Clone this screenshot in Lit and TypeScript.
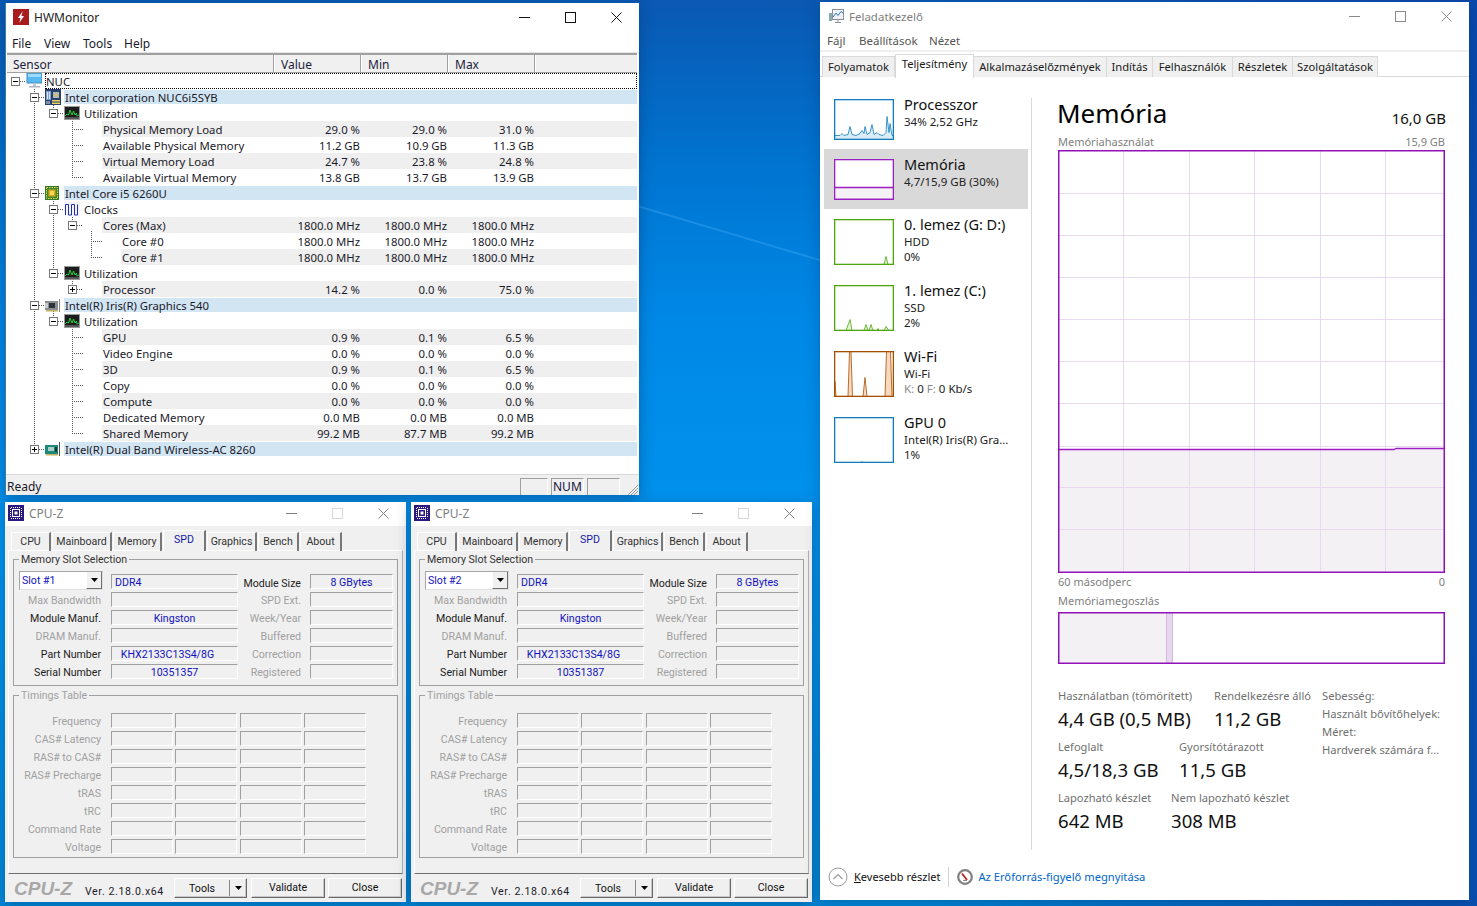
import { LitElement, html, css, svg } from "lit";
import { customElement, property } from "lit/decorators.js";

const UI = css`"Noto Sans", "Open Sans", sans-serif`;

const base = css`
  * { box-sizing: border-box; }
  :host { display: block; height: 100%; font-family: ${UI}; font-size: 11.35px; color: #1a1a2a; }
  .title { display: flex; align-items: center; flex: none; background: #fff; }
  .ctl { margin-left: auto; display: flex; }
  .ctl span { width: 46px; display: flex; align-items: center; justify-content: center; }
  .ctl svg { display: block; }
`;

function controls(color: string, maxColor = color) {
  return html`<div class="ctl">
    <span><svg width="11" height="11" viewBox="0 0 11 11"><path d="M0 5.5H11" stroke=${color} fill="none"/></svg></span>
    <span><svg width="11" height="11" viewBox="0 0 11 11"><rect x=".5" y=".5" width="10" height="10" stroke=${maxColor} fill="none"/></svg></span>
    <span><svg width="11" height="11" viewBox="0 0 11 11"><path d="M.5 .5L10.5 10.5M10.5 .5L.5 10.5" stroke=${color} fill="none"/></svg></span>
  </div>`;
}

/* ---------- HWMonitor icons ---------- */
const icons: Record<string, unknown> = {
  monitor: svg`<rect x="1" y="0" width="15" height="10" fill="#58b8f0" stroke="#3a8cc8"/><rect x="2" y="1" width="13" height="3" fill="#9adcff"/><rect x="7" y="10" width="3" height="3" fill="#c0c8d0"/><rect x="3" y="13" width="11" height="1.5" fill="#aab4c0"/>`,
  board: svg`<rect x="0" y="0" width="16" height="16" fill="#28406e"/><rect x="1" y="2" width="5" height="9" fill="#7f9fd0"/><rect x="2" y="3" width="1" height="7" fill="#d8e4f4"/><rect x="4" y="3" width="1" height="7" fill="#d8e4f4"/><rect x="8" y="3" width="6" height="6" fill="#b4b8b0"/><rect x="10" y="5" width="2" height="2" fill="#e8c040"/><rect x="7" y="11" width="8" height="1.5" fill="#e8d060"/><rect x="7" y="13.5" width="8" height="1.5" fill="#e8d060"/><rect x="1" y="12" width="4" height="3" fill="#8090a8"/>`,
  util: svg`<rect x=".5" y="1.500" width="15" height="13" fill="#1c1c1c" stroke="#9a9a9a"/><rect x="1" y="12" width="14" height="2" fill="#555"/><path d="M1 11L3 9L4.500 10L6 5L8 10L9.500 6L11 10L12.500 8L13 11L15 10" stroke="#20d040" fill="none"/>`,
  cpu: svg`<rect x="0" y="1" width="14" height="14" fill="#2f7a2c"/><rect x="1.500" y="2.500" width="11" height="11" fill="#3f8a30" stroke="#e8d040" stroke-dasharray="1.500 1"/><rect x="3.500" y="4.500" width="7" height="7" fill="#d8a820"/><rect x="5" y="6" width="4" height="4" fill="#f8d850"/>`,
  clock: svg`<rect x="0" y="1" width="16" height="14" fill="#f2f3fb"/><path d="M1.500 14V3.500H4.500V14H7.500V3.500H10.500V14H13.500V3.500" stroke="#2030a8" fill="none"/>`,
  gpu: svg`<rect x="0" y="4" width="13" height="9" fill="#8a8f94"/><rect x="4" y="6" width="6" height="5" fill="#30343a"/><rect x="1" y="13" width="12" height="1.500" fill="#c8b060"/><path d="M14.500 2V15" stroke="#888" fill="none"/><rect x="0" y="6" width="3" height="5" fill="#c8ccd0"/>`,
  wifi: svg`<rect x="0" y="4" width="13" height="9" fill="#1c8a78"/><rect x="3" y="6" width="6" height="4" fill="#a8d0c8"/><rect x="1" y="13" width="12" height="1.500" fill="#c8b060"/><path d="M14.500 1V15" stroke="#555" fill="none"/><rect x="10" y="6" width="2" height="5" fill="#103830"/>`,
};

type Row = { d: number; t: string; icon?: string; exp?: "-" | "+"; kind?: string; v?: string[]; alt?: boolean };
const R = (d: number, t: string, v: string[], alt: boolean): Row => ({ d, t, v, alt });
const mhz = "1800.0 MHz";
const rows: Row[] = [
  { d: 0, t: "NUC", icon: "monitor", exp: "-", kind: "root" },
  { d: 1, t: "Intel corporation NUC6i5SYB", icon: "board", exp: "-", kind: "hw" },
  { d: 2, t: "Utilization", icon: "util", exp: "-" },
  R(3, "Physical Memory Load", ["29.0 %", "29.0 %", "31.0 %"], true),
  R(3, "Available Physical Memory", ["11.2 GB", "10.9 GB", "11.3 GB"], false),
  R(3, "Virtual Memory Load", ["24.7 %", "23.8 %", "24.8 %"], true),
  R(3, "Available Virtual Memory", ["13.8 GB", "13.7 GB", "13.9 GB"], false),
  { d: 1, t: "Intel Core i5 6260U", icon: "cpu", exp: "-", kind: "hw" },
  { d: 2, t: "Clocks", icon: "clock", exp: "-" },
  { d: 3, t: "Cores (Max)", exp: "-", v: [mhz, mhz, mhz], alt: true },
  R(4, "Core #0", [mhz, mhz, mhz], false),
  R(4, "Core #1", [mhz, mhz, mhz], true),
  { d: 2, t: "Utilization", icon: "util", exp: "-" },
  { d: 3, t: "Processor", exp: "+", v: ["14.2 %", "0.0 %", "75.0 %"], alt: true },
  { d: 1, t: "Intel(R) Iris(R) Graphics 540", icon: "gpu", exp: "-", kind: "hw" },
  { d: 2, t: "Utilization", icon: "util", exp: "-" },
  R(3, "GPU", ["0.9 %", "0.1 %", "6.5 %"], true),
  R(3, "Video Engine", ["0.0 %", "0.0 %", "0.0 %"], false),
  R(3, "3D", ["0.9 %", "0.1 %", "6.5 %"], true),
  R(3, "Copy", ["0.0 %", "0.0 %", "0.0 %"], false),
  R(3, "Compute", ["0.0 %", "0.0 %", "0.0 %"], true),
  R(3, "Dedicated Memory", ["0.0 MB", "0.0 MB", "0.0 MB"], false),
  R(3, "Shared Memory", ["99.2 MB", "87.7 MB", "99.2 MB"], true),
  { d: 1, t: "Intel(R) Dual Band Wireless-AC 8260", icon: "wifi", exp: "+", kind: "hw" },
];

const guidePath = (() => {
  const h = (y: number, a: number, b: number) => `M${a} ${y + 0.5}H${b}`;
  const v = (x: number, a: number, b: number) => `M${x + 0.5} ${a}V${b}`;
  const p: string[] = [];
  p.push(h(82, 20, 26), v(34, 90, 447));
  [98, 194, 306, 450].forEach((y) => p.push(h(y, 39, 45)));
  p.push(v(53, 104, 110), v(53, 200, 270), v(53, 312, 318));
  [114, 210, 274, 322].forEach((y) => p.push(h(y, 58, 64)));
  p.push(v(72, 216, 222), v(72, 280, 286), h(226, 77, 83), h(290, 77, 83));
  p.push(v(72, 120, 179), v(72, 328, 435));
  [130, 146, 162, 178, 338, 354, 370, 386, 402, 418, 434].forEach((y) => p.push(h(y, 72, 83)));
  p.push(v(91, 232, 259), h(242, 91, 102), h(258, 91, 102));
  return p.join("");
})();

@customElement("hw-monitor")
class HwMonitor extends LitElement {
  static styles = [base, css`
    .win { height: 100%; display: flex; flex-direction: column; background: #fff; border-left: 1px solid #3a7aa8; box-shadow: 0 4px 14px rgba(0,40,90,.4); }
    .title { height: 28px; padding-left: 7px; font-size: 12px; color: #222; }
    .logo { margin-right: 5px; display: block; }
    .menu { display: grid; grid-template-columns: 32px 39px 41px auto; height: 22px; padding: 4px 0 0 6px; font-size: 12px; flex: none; border-bottom: 1px solid #e4e4e4; }
    .head { display: flex; height: 20px; margin: 0 2px 0 1px; flex: none; border-top: 2px solid #a0a0a0; border-bottom: 1px solid #a0a0a0; background: #f0f0f0; font-size: 12px; color: #1c1c3a; line-height: 19px; }
    .head span { width: 87px; padding-left: 7px; border-right: 1px solid #a0a0a0; box-shadow: 1px 0 0 #fff; }
    .head span.first { width: 267px; padding-left: 6px; }
    .head span.last { flex: 1; border: 0; box-shadow: none; }
    .tree { position: relative; flex: 1; margin: 0 2px 0 1px; }
    .guides { position: absolute; left: 0; top: 0; pointer-events: none; }
    .row { display: flex; height: 16px; position: relative; }
    .gut { flex: none; display: flex; align-items: center; position: relative; z-index: 1; }
    .exp { flex: none; display: block; margin-top: 1px; }
    .ico { flex: none; display: block; margin-left: 6px; }
    .body { flex: 1; display: flex; line-height: 18px; padding-left: 1px; }
    .body .n { flex: 1; white-space: nowrap; }
    .body .c { width: 87px; text-align: right; white-space: nowrap; }
    .body .e { width: 103px; }
    .alt { background: #efefef; }
    .hw { background: #d2e5f3; margin: 1px 0; line-height: 15px; }
    .root { outline: 1px dotted #000; outline-offset: -1px; }
    .status { height: 21px; flex: none; display: flex; background: #f0f0f0; border-top: 1px solid #d8d8d8; align-items: flex-end; font-size: 12px; padding-left: 1px; }
    .status .rd { margin-right: auto; line-height: 16px; }
    .pane { height: 17px; border-top: 1px solid #a0a0a0; border-left: 1px solid #a0a0a0; border-right: 1px solid #fff; margin-left: 3px; line-height: 16px; padding-left: 1px; }
    .p1 { width: 28px; } .p2 { width: 33px; color: #14143c; } .p3 { width: 33px; }
    .grip { margin-left: 7px; margin-right: 1px; display: block; }
  `];
  render() {
    return html`<div class="win">
      <div class="title">
        <svg class="logo" width="16" height="16" viewBox="0 0 16 16"><rect width="16" height="16" fill="#a81c20"/><path d="M9.800 2L5 9H7.600L6.200 14L11 7H8.400Z" fill="#fff"/></svg>
        HWMonitor
        ${controls("#111")}
      </div>
      <div class="menu"><span>File</span><span>View</span><span>Tools</span><span>Help</span></div>
      <div class="head"><span class="first">Sensor</span><span>Value</span><span>Min</span><span>Max</span><span class="last"></span></div>
      <div class="tree">
        <svg class="guides" width="630" height="384" viewBox="7 74 630 384"><path d=${guidePath} stroke="#555" fill="none" stroke-dasharray="1 1"/></svg>
        ${rows.map((r) => this.row(r))}
      </div>
      <div class="status">
        <span class="rd">Ready</span>
        <span class="pane p1"></span><span class="pane p2">NUM</span><span class="pane p3"></span>
        <svg class="grip" width="11" height="11" viewBox="0 0 11 11"><path d="M1 11L11 1M4 11L11 4M7 11L11 7" stroke="#999" fill="none"/></svg>
      </div>
    </div>`;
  }
  row(r: Row) {
    const cls = ["body", r.alt ? "alt" : "", r.kind ?? ""].join(" ");
    return html`<div class="row">
      <div class="gut" style="width:${38 + 19 * r.d}px;padding-left:${4 + 19 * r.d}px">
        ${r.exp ? html`<svg class="exp" width="9" height="9" viewBox="0 0 9 9"><rect x=".5" y=".5" width="8" height="8" fill="#fff" stroke="#777"/><path d=${r.exp === "-" ? "M2 4.500H7" : "M2 4.500H7M4.500 2V7"} stroke="#000" fill="none"/></svg>` : ""}
        ${r.icon ? html`<svg class="ico" width="16" height="16" viewBox="0 0 16 16">${icons[r.icon]}</svg>` : ""}
      </div>
      <div class=${cls}>
        <span class="n">${r.t}</span>
        ${r.v ? html`<span class="c">${r.v[0]}</span><span class="c">${r.v[1]}</span><span class="c">${r.v[2]}</span><span class="e"></span>` : ""}
      </div>
    </div>`;
  }
}

/* ---------- CPU-Z ---------- */
@customElement("cpu-z-window")
class CpuZWindow extends LitElement {
  @property() slotName = "Slot #1";
  @property() serial = "10351357";
  static styles = [base, css`
    :host { font-family: Roboto, "Noto Sans", sans-serif; font-size: 10.6px; }
    .win { height: 100%; display: flex; flex-direction: column; background: #f0f0f0; box-shadow: 0 4px 14px rgba(0,40,90,.35); }
    .title { height: 24px; padding: 0 0 2px 3px; font-size: 12px; color: #808080; font-family: ${UI}; }
    .logo { display: block; margin-right: 5px; }
    .tabs { display: grid; grid-template-columns: 41px 61px 50px 44px 51px 42px 43px; height: 20px; margin: 4px 0 0 6px; flex: none; position: relative; z-index: 1; }
    .tab { margin-top: 2px; border-top: 1px solid #fff; border-left: 1px solid #fff; border-right: 2px solid #787878; text-align: center; line-height: 18px; margin-right: 1px; color: #333; }
    .tab.on { margin-top: 0; height: 21px; background: #f0f0f0; color: #1818a8; line-height: 18px; }
    .panel { flex: 1; margin: 0 3px; padding: 1px 4px 0 4px; border-top: 1px solid #fff; border-left: 1px solid #fff; border-right: 1px solid #b0b0b0; border-bottom: 1px solid #707070; }
    fieldset { margin: 0 0 2px; padding: 0; min-width: 0; border: 1px solid #a0a0a0; width: 385px; }
    legend { margin-left: 5px; padding: 0 2px; line-height: 15px; margin-bottom: -1px; color: #333; }
    .off legend { color: #a0a0a0; }
    .g1 { display: grid; grid-auto-rows: 15px; row-gap: 3px; padding: 8px 0 0; height: 119px; grid-template-columns: 87px 10px 127px 63px 9px 83px; }
    .g2 { display: grid; grid-template-columns: 87px 10px 64px 65px 64px 64px; grid-auto-rows: 15px; row-gap: 3px; padding: 11px 0 0; height: 155px; }
    .lb { text-align: right; line-height: 17px; white-space: nowrap; color: #222; }
    .lb.dis { color: #a0a0a0; }
    .lb.low { line-height: 19px; }
    .f { border-top: 1px solid #a0a0a0; border-left: 1px solid #a0a0a0; border-bottom: 1px solid #fff; border-right: 1px solid #fff; color: #1212c0; text-align: center; line-height: 15px; white-space: nowrap; }
    .f.l { text-align: left; padding-left: 3px; }
    .f.pn { padding-right: 14px; }
    .sp { display: block; }
    .g2 .f { margin-right: 2px; }
    .g2 .f:nth-child(6n + 4) { margin-right: 3px; }
    .sel { margin: -3px -2px -1px 5px; height: 19px; background: #fff; border: 1px solid #a8a8a8; border-right-color: #e0e0e0; border-bottom-color: #e0e0e0; display: flex; justify-content: space-between; color: #1212c0; padding-left: 2px; line-height: 18px; }
    .sel i { width: 16px; background: #f0f0f0; border-left: 1px solid #fff; display: flex; align-items: center; justify-content: center; border-right: 1px solid #707070; border-bottom: 1px solid #707070; }
    .foot { height: 28px; flex: none; display: flex; align-items: flex-start; padding: 4px 0 0 9px; }
    .brand { width: 71px; font: italic bold 19px/21px "Liberation Sans", sans-serif; color: #a8a8a8; }
    .ver { width: 89px; padding-top: 6px; line-height: 16px; letter-spacing: .6px; }
    .btn { height: 20px; background: #f0f0f0; border-top: 1px solid #fff; border-left: 1px solid #fff; border-right: 1px solid #696969; border-bottom: 1px solid #696969; box-shadow: inset -1px -1px 0 #c8c8c8; text-align: center; line-height: 17px; color: #111; width: 74px; margin-right: 3px; }
    .tools { display: flex; width: 73px; margin-right: 4px; padding: 0; }
    .tools span { flex: 1; line-height: 19px; }
    .tools i { width: 17px; border-left: 1px solid #888; display: flex; align-items: center; justify-content: center; height: 16px; margin-top: 1px; }
  `];
  render() {
    const tabs = ["CPU", "Mainboard", "Memory", "SPD", "Graphics", "Bench", "About"];
    const timing = ["Frequency", "CAS# Latency", "RAS# to CAS#", "RAS# Precharge", "tRAS", "tRC", "Command Rate", "Voltage"];
    const arrow = html`<svg width="7" height="4" viewBox="0 0 7 4"><path d="M0 0H7L3.500 4Z" fill="#000"/></svg>`;
    const line = (l: string, off: boolean, val: string, r: string, cl = "") => html`
      <div class="lb ${off ? "dis" : ""}">${l}</div><span class="sp"></span><div class="f ${cl}">${val}</div>
      <div class="lb dis">${r}</div><span class="sp"></span><div class="f"></div>`;
    return html`<div class="win">
      <div class="title">
        <svg class="logo" width="16" height="16" viewBox="0 0 16 16"><rect width="16" height="16" fill="#2a1a80"/><rect x="4.500" y="4.500" width="7" height="7" fill="none" stroke="#fff"/><rect x="6.500" y="6.500" width="3" height="3" fill="#fff"/><path d="M3 2.500H13M3 13.500H13M2.500 3V13M13.500 3V13" stroke="#fff" stroke-dasharray="1 1" fill="none"/></svg>
        CPU-Z
        ${controls("#808080", "#d8d8d8")}
      </div>
      <div class="tabs">${tabs.map((t) => html`<div class="tab ${t === "SPD" ? "on" : ""}">${t}</div>`)}</div>
      <div class="panel">
        <fieldset>
          <legend>Memory Slot Selection</legend>
          <div class="g1">
            <div class="sel">${this.slotName}<i>${arrow}</i></div><span class="sp"></span><div class="f l">DDR4</div>
            <div class="lb low">Module Size</div><span class="sp"></span><div class="f">8 GBytes</div>
            ${line("Max Bandwidth", true, "", "SPD Ext.")}
            ${line("Module Manuf.", false, "Kingston", "Week/Year")}
            ${line("DRAM Manuf.", true, "", "Buffered")}
            ${line("Part Number", false, "KHX2133C13S4/8G", "Correction", "pn")}
            ${line("Serial Number", false, this.serial, "Registered")}
          </div>
        </fieldset>
        <fieldset class="off">
          <legend>Timings Table</legend>
          <div class="g2">
            ${timing.map((t) => html`<div class="lb dis">${t}</div><span class="sp"></span><div class="f"></div><div class="f"></div><div class="f"></div><div class="f"></div>`)}
          </div>
        </fieldset>
      </div>
      <div class="foot">
        <div class="brand">CPU-Z</div>
        <div class="ver">Ver. 2.18.0.x64</div>
        <div class="btn tools"><span>Tools</span><i>${arrow}</i></div>
        <div class="btn">Validate</div>
        <div class="btn">Close</div>
      </div>
    </div>`;
  }
}

/* ---------- Task Manager ---------- */
type Thumb = { title: string; l1: unknown; l2?: unknown; c: string; fill: string; h: number; path?: string; ln?: string };
const thumbs: Thumb[] = [
  { title: "Processzor", l1: "34% 2,52 GHz", c: "#117dbb", fill: "#d9ecf7", h: 40,
    path: "M0 36L6 36L8 34L10 36L14 35L16 27L18 35L22 36L26 34L28 31L30 34L31 27L33 35L36 33L38 25L40 35L43 33L45 35L49 36L52 33L53 17L55 33L56 24L58 36L60 36V40H0Z" },
  { title: "Memória", l1: "4,7/15,9 GB (30%)", c: "#9b1fc4", fill: "#f4f2f4", h: 40, path: "M0 28H60V40H0Z", ln: "sel" },
  { title: "0. lemez (G: D:)", l1: "HDD", l2: "0%", c: "#4da60c", fill: "#e4f2d8", h: 45, path: "M50 45L52 37L54 45Z" },
  { title: "1. lemez (C:)", l1: "SSD", l2: "2%", c: "#4da60c", fill: "#e4f2d8", h: 45,
    path: "M12 45L16 34L18 45ZM30 45L32 39L34 45ZM35 45L37 39L39 45ZM43 45L44 43L45 45ZM50 45L52 41L55 45Z" },
  { title: "Wi-Fi", l1: "Wi-Fi", l2: html`<span class="kf">K:</span> 0 <span class="kf">F:</span> 0 Kb/s`, c: "#a74f01", fill: "#f7d9bf", h: 45,
    path: "M0 45L1 30L2 45ZM14 45L15.500 0L17 0L18.500 45ZM29 45L31 26L33 45ZM51 45L52.500 0L54 0L55 0L56.500 0L58 45Z" },
  { title: "GPU 0", l1: "Intel(R) Iris(R) Gra...", l2: "1%", c: "#117dbb", fill: "#d9ecf7", h: 45, path: "M27 45L28 44L29 45Z" },
];

const stats = [
  { w: 156, a: ["Használatban (tömörített)", "4,4 GB (0,5 MB)"], b: ["Rendelkezésre álló", "11,2 GB"] },
  { w: 121, a: ["Lefoglalt", "4,5/18,3 GB"], b: ["Gyorsítótárazott", "11,5 GB"] },
  { w: 113, a: ["Lapozható készlet", "642 MB"], b: ["Nem lapozható készlet", "308 MB"] },
];

const chartGrid = (() => {
  const c: string[] = [];
  [65, 131, 196, 262, 327].forEach((x) => c.push(`M${x + 0.5} 0V423`));
  [43, 85, 127, 169, 211, 253, 296, 337, 379].forEach((y) => c.push(`M0 ${y + 0.5}H387`));
  return c.join("");
})();

@customElement("task-manager")
class TaskManager extends LitElement {
  static styles = [base, css`
    :host { font-size: 11.2px; color: #1a1a1a; }
    .win { height: 100%; display: flex; flex-direction: column; background: #fff; box-shadow: 0 4px 14px rgba(0,40,90,.3); }
    .title { height: 28px; padding-left: 8px; font-size: 11.5px; color: #808080; }
    .logo { display: block; margin-right: 5px; }
    .menu { display: grid; grid-template-columns: 32px 70px auto; height: 22px; padding: 3px 0 0 7px; border-bottom: 2px solid #f0f0f0; color: #555; flex: none; font-size: 11.5px; }
    .tabs { display: grid; grid-template-columns: 73px 79px 133px 46px 80px 60px 85px; height: 25px; padding-left: 2px; margin-top: 0; border-bottom: 1px solid #d9d9d9; align-items: end; flex: none; }
    .tab { height: 21px; background: #f0f0f0; border: 1px solid #d9d9d9; border-bottom: 0; border-left: 0; text-align: center; line-height: 19px; white-space: nowrap; color: #1a1a1a; margin-top: 2px; }
    .tab:first-child { border-left: 1px solid #d9d9d9; }
    .tab.on { height: 24px; background: #fff; border-left: 1px solid #d9d9d9; margin-bottom: -1px; line-height: 18px; }
    .main { flex: 1; display: flex; min-height: 0; }
    .side { width: 211px; padding: 12px 3px 0 4px; flex: none; }
    .it { display: flex; padding: 10px 0 0 10px; }
    .it.sel { background: #d9d9d9; }
    .th { width: 60px; flex: none; display: block; }
    .tx { margin-left: 10px; font-size: 11.5px; line-height: 15px; color: #222; white-space: nowrap; }
    .tx b { display: block; font-weight: 400; font-size: 14.5px; line-height: 17px; color: #111; margin-top: -3px; margin-bottom: 1px; }
    .kf { color: #8a8a8a; }
    .det { flex: 1; margin: 21px 24px 4px 0; padding-left: 26px; border-left: 1px solid #d9d9d9; display: flex; flex-direction: column; }
    .det-h { display: flex; justify-content: space-between; align-items: flex-start; height: 36px; }
    .det-h b { font-weight: 400; font-size: 26px; line-height: 30px; color: #000; margin-left: -1px; }
    .det-h span { font-size: 15px; line-height: 20px; color: #111; margin-top: 10px; margin-right: -1px; }
    .cap { display: flex; justify-content: space-between; color: #808080; line-height: 15px; height: 16px; font-size: 11px; }
    .chart { display: block; flex: none; }
    .cap.time { margin-top: 1px; height: 19px; line-height: 16px; }
    .bar { margin-top: 3px; }
    .stats { display: flex; margin-top: 24px; }
    .lft { width: 264px; flex: none; }
    .srow { display: flex; height: 51px; }
    .srow .l { color: #707070; line-height: 16px; white-space: nowrap; font-size: 11.1px; }
    .srow .v { font-size: 18.6px; line-height: 29px; color: #111; white-space: nowrap; }
    .rgt { color: #707070; line-height: 18px; white-space: nowrap; margin-top: -1px; }
    .rgt div { height: 18px; }
    .bot { height: 46px; flex: none; display: flex; align-items: center; padding-left: 8px; }
    .bot .k { margin: 0 0 2px 6px; color: #111; font-size: 11px; }
    .bot u { text-decoration: underline; }
    .bot .sepv { width: 1px; height: 20px; background: #d0d0d0; margin: 0 8px; }
    .bot a { margin: 0 0 2px 5px; color: #0066cc; text-decoration: none; }
    .bot svg { display: block; flex: none; }
  `];
  render() {
    const tabs = ["Folyamatok", "Teljesítmény", "Alkalmazáselőzmények", "Indítás", "Felhasználók", "Részletek", "Szolgáltatások"];
    return html`<div class="win">
      <div class="title">
        <svg class="logo" width="16" height="16" viewBox="0 0 16 16"><rect x="1" y="5" width="3" height="8" fill="#8aa"/><rect x="4.500" y="1.500" width="11" height="10" fill="#eef2f6" stroke="#8a9098"/><path d="M5 9L8 5L10 7.500L13 3.500L15 5" stroke="#2c7ac0" fill="none"/><path d="M7 14.500H13M10 11.500V14" stroke="#8a9098" fill="none"/></svg>
        Feladatkezelő
        ${controls("#8a8a8a")}
      </div>
      <div class="menu"><span>Fájl</span><span>Beállítások</span><span>Nézet</span></div>
      <div class="tabs">${tabs.map((t, i) => html`<div class="tab ${i === 1 ? "on" : ""}">${t}</div>`)}</div>
      <div class="main">
        <div class="side">
          ${thumbs.map((t) => html`<div class="it ${t.ln ? "sel" : ""}" style="height:${t.h + (t.h === 40 ? 20 : 21)}px">
            <svg class="th" width="60" height=${t.h + 1} viewBox="0 0 60 ${t.h + 1}">
              <rect x="0" y="0" width="60" height=${t.h + 1} fill="#fff"/>
              <path d=${t.path ?? ""} fill=${t.fill} stroke=${t.c} stroke-width=${t.ln ? 1.300 : 0.8} transform="translate(0 .5)"/>
              <rect x=".65" y=".65" width="58.700" height=${t.h - 0.3} fill="none" stroke=${t.c} stroke-width="1.300"/>
            </svg>
            <div class="tx"><b>${t.title}</b>${t.l1}${t.l2 ? html`<br />${t.l2}` : ""}</div>
          </div>`)}
        </div>
        <div class="det">
          <div class="det-h"><b>Memória</b><span>16,0 GB</span></div>
          <div class="cap"><span>Memóriahasználat</span><span>15,9 GB</span></div>
          <svg class="chart" width="387" height="423" viewBox="0 0 387 423">
            <path d="M0 299H336L338 298H387V423H0Z" fill="#f4f1f5"/>
            <path d=${chartGrid} stroke="#e7d9f0" fill="none"/>
            <path d="M0 299.500H336L338 298.500H387" stroke="#9b1fc4" fill="none" stroke-width="1.300"/>
            <rect x=".75" y=".75" width="385.500" height="421.500" fill="none" stroke="#9012b8" stroke-width="1.500"/>
          </svg>
          <div class="cap time"><span>60 másodperc</span><span>0</span></div>
          <div class="cap"><span>Memóriamegoszlás</span></div>
          <svg class="chart bar" width="387" height="52" viewBox="0 0 387 52">
            <rect x="0" y="0" width="108" height="52" fill="#f4f1f5"/>
            <rect x="108" y="0" width="6" height="52" fill="#e6d6ee"/>
            <path d="M108.500 0V52M114.500 0V52" stroke="#d4b8e2" fill="none"/>
            <rect x=".75" y=".75" width="385.500" height="50.500" fill="none" stroke="#9012b8" stroke-width="1.500"/>
          </svg>
          <div class="stats">
            <div class="lft">
              ${stats.map((s) => html`<div class="srow">
                <div style="width:${s.w}px"><div class="l">${s.a[0]}</div><div class="v">${s.a[1]}</div></div>
                <div><div class="l">${s.b[0]}</div><div class="v">${s.b[1]}</div></div>
              </div>`)}
            </div>
            <div class="rgt"><div>Sebesség:</div><div>Használt bővítőhelyek:</div><div>Méret:</div><div>Hardverek számára f...</div></div>
          </div>
        </div>
      </div>
      <div class="bot">
        <svg width="20" height="20" viewBox="0 0 20 20"><circle cx="10" cy="10" r="9" fill="#fff" stroke="#9a9a9a"/><path d="M5.500 12L10 7.500L14.500 12" fill="none" stroke="#9a9a9a" stroke-width="1.200"/></svg>
        <span class="k"><u>K</u>evesebb részlet</span>
        <span class="sepv"></span>
        <svg width="16" height="16" viewBox="0 0 16 16"><circle cx="8" cy="8" r="6.800" fill="#fdfdfd" stroke="#808080" stroke-width="2.200"/><path d="M5 4.500L10 11" stroke="#c02020" stroke-width="1.800" fill="none"/><path d="M6 11.500H10" stroke="#888" fill="none"/></svg>
        <a>Az Erőforrás-figyelő megnyitása</a>
      </div>
    </div>`;
  }
}

/* ---------- Desktop ---------- */
@customElement("app-root")
class AppRoot extends LitElement {
  static styles = css`
    :host { display: block; position: relative; width: 1477px; height: 906px; overflow: hidden;
      background:
        linear-gradient(90deg, rgba(10,70,170,0) 62%, rgba(10,70,170,.85) 100%),
        linear-gradient(180deg, #0a58b2 0, #0074d0 18%, #0088e6 35%, #0094ee 60%, #0088d8 100%); }
    .ray { position: absolute; left: 0; top: 0; }
    .w { position: absolute; display: block; }
    hw-monitor { left: 5px; top: 3px; width: 634px; height: 492px; }
    .cz1 { left: 5px; top: 502px; width: 401px; height: 400px; }
    .cz2 { left: 411px; top: 502px; width: 401px; height: 400px; }
    task-manager { left: 820px; top: 2px; width: 649px; height: 898px; }
  `;
  render() {
    return html`
      <svg class="ray" width="1477" height="906" viewBox="0 0 1477 906"><path d="M600 195L860 272" stroke="#3aa4f4" stroke-width="2" fill="none" opacity=".45"/></svg>
      <hw-monitor class="w"></hw-monitor>
      <cpu-z-window class="w cz1" slotName="Slot #1" serial="10351357"></cpu-z-window>
      <cpu-z-window class="w cz2" slotName="Slot #2" serial="10351387"></cpu-z-window>
      <task-manager class="w"></task-manager>`;
  }
}
